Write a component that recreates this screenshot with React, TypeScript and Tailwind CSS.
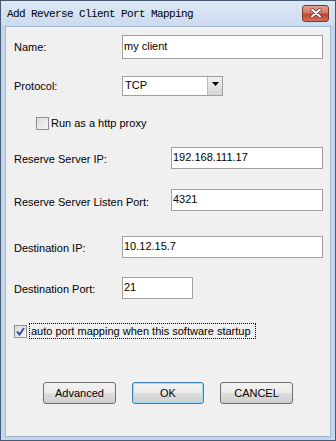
import React from "react";

const btnBg =
  "bg-[linear-gradient(to_bottom,#f2f2f2_0%,#ebebeb_50%,#dddddd_51%,#cfcfcf_100%)]";

function Check({ checked }: { checked?: boolean }) {
  return (
    <div className="w-[13px] h-[13px] border border-[#8e8f8f] bg-[linear-gradient(135deg,#dcdcdc_0%,#f6f6f6_100%)] flex items-center justify-center shrink-0">
      {checked && (
        <svg width="11" height="11" viewBox="0 0 11 11">
          <path d="M2 5.5 L4.5 8.5 L9 2" fill="none" stroke="#3b55a6" strokeWidth="2" />
        </svg>
      )}
    </div>
  );
}

function Input({ value, w, h }: { value: string; w: string; h: string }) {
  return (
    <div className={`${w} ${h} border border-[#a0a0a0] bg-white flex items-center pl-[1px] pb-[2px] text-black`}>
      {value}
    </div>
  );
}

export default function App() {
  return (
    <div
      className="w-[336px] h-[441px] border border-[#465a73] bg-[#c4d6ec] flex flex-col text-[11px] text-black"
      style={{ fontFamily: '"Liberation Sans", Arial, sans-serif' }}
    >
      <div className="h-[25px] shrink-0 flex items-center justify-between bg-[linear-gradient(to_bottom,#dde8f5_0%,#cbdbef_100%)] pl-[6px] pr-[6px]">
        <span
          className="text-[11px] tracking-[-0.6px] text-black pt-[1px]"
          style={{ fontFamily: '"Liberation Mono", "Courier New", monospace' }}
        >
          Add Reverse Client Port Mapping
        </span>
        <div className="w-[27px] h-[17px] mt-[-1px] rounded-[3px] border border-[#7d3a30] bg-[linear-gradient(to_bottom,#e6a193_0%,#d27866_45%,#c0432f_55%,#d0705d_100%)] flex items-center justify-center">
          <svg width="12" height="10" viewBox="0 0 12 10">
            <path d="M2 1.5 L10 8.5 M10 1.5 L2 8.5" stroke="#6b2a22" strokeWidth="3.4" strokeLinecap="round" />
            <path d="M2 1.5 L10 8.5 M10 1.5 L2 8.5" stroke="#ffffff" strokeWidth="2" strokeLinecap="round" />
          </svg>
        </div>
      </div>
      <div className="flex-1 flex px-[4px] pb-[3px]">
        <div className="flex-1 border border-[#a5b8d0] bg-[#f0f0f0] flex flex-col">
          {/* Name */}
          <div className="mt-[8px] flex items-center pl-[8px]">
            <div className="w-[108px] pt-[1px]">Name:</div>
            <Input value="my client" w="w-[201px]" h="h-[24px]" />
          </div>
          {/* Protocol */}
          <div className="mt-[17px] flex items-center pl-[8px]">
            <div className="w-[108px]">Protocol:</div>
            <div className="w-[101px] h-[20px] border border-[#a0a0a0] bg-white flex">
              <div className="flex-1 flex items-center pl-[2px] pb-[2px]">TCP</div>
              <div className="w-[15px] border-l border-[#b8b8b8] bg-[linear-gradient(to_bottom,#f2f2f2_0%,#e4e4e4_50%,#d6d6d6_100%)] flex justify-center pt-[5px]">
                <svg width="7" height="4" viewBox="0 0 7 4">
                  <path d="M0 0 L7 0 L3.5 4 Z" fill="#000" />
                </svg>
              </div>
            </div>
          </div>
          {/* Run as http proxy */}
          <div className="mt-[21px] flex items-center pl-[30px] h-[13px]">
            <Check />
            <span className="ml-[2px]">Run as a http proxy</span>
          </div>
          {/* Reserve server IP */}
          <div className="mt-[17px] flex items-center pl-[8px]">
            <div className="w-[157px] pt-[3px]">Reserve Server IP:</div>
            <Input value="192.168.111.17" w="w-[152px]" h="h-[22px]" />
          </div>
          {/* Listen port */}
          <div className="mt-[20px] flex items-center pl-[8px]">
            <div className="w-[157px] pt-[5px]">Reserve Server Listen Port:</div>
            <Input value="4321" w="w-[152px]" h="h-[22px]" />
          </div>
          {/* Destination IP */}
          <div className="mt-[25px] flex items-center pl-[8px]">
            <div className="w-[108px] pt-[3px]">Destination IP:</div>
            <Input value="10.12.15.7" w="w-[201px]" h="h-[22px]" />
          </div>
          {/* Destination Port */}
          <div className="mt-[19px] flex items-center pl-[8px]">
            <div className="w-[108px] pt-[2px]">Destination Port:</div>
            <Input value="21" w="w-[71px]" h="h-[22px]" />
          </div>
          {/* auto mapping */}
          <div className="mt-[24px] flex items-center pl-[8px] h-[16px]">
            <Check checked />
            <span className="ml-[2px] h-[16px] w-[227px] border border-dotted border-black flex items-center pl-[1px]">
              auto port mapping when this software startup
            </span>
          </div>
          {/* buttons */}
          <div className="mt-[43px] flex pl-[37px] gap-[16px]">
            <div className={`w-[73px] h-[22px] rounded-[3px] border border-[#707070] ${btnBg} flex items-center justify-center`}>
              Advanced
            </div>
            <div className={`w-[72px] h-[22px] rounded-[3px] border border-[#3c7fb1] shadow-[inset_0_0_0_1px_#9fdcf6] ${btnBg} flex items-center justify-center`}>
              OK
            </div>
            <div className={`w-[73px] h-[22px] rounded-[3px] border border-[#707070] ${btnBg} flex items-center justify-center`}>
              CANCEL
            </div>
          </div>
        </div>
      </div>
    </div>
  );
}
